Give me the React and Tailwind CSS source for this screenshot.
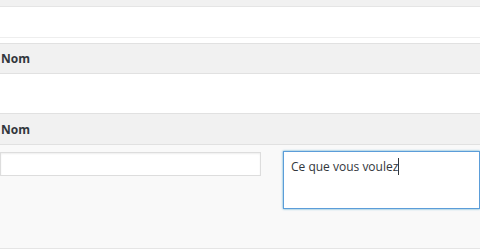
const App = () => {
  return (
    <div className="w-[480px] h-[250px] overflow-hidden bg-white text-[#23282d] font-['Open_Sans','Liberation_Sans',sans-serif]">
      {/* previous row */}
      <div className="h-[7px] bg-[#f1f1f1] border-b border-[#e5e5e5]" />
      <div className="h-[31px] bg-white border-b border-[#eeeeee]" />
      <div className="h-[5px]" />

      {/* first group */}
      <div className="h-[31px] bg-[#f1f1f1] border-y border-[#e1e1e1] flex items-center pl-[1px]">
        <span className="text-[12px] font-bold text-[#32373c]">Nom</span>
      </div>
      <div className="h-[39px] bg-white" />

      {/* second group */}
      <div className="h-[32px] bg-[#f1f1f1] border-y border-[#e1e1e1] flex items-center pl-[1px] pt-[2px]">
        <span className="text-[12px] font-bold text-[#32373c]">Nom</span>
      </div>
      <div className="h-[104px] bg-[#f9f9f9] border-b border-[#e5e5e5] flex items-start pt-[6px]">
        <div className="w-[261px] h-[24px] mt-[1px] bg-white border border-[#dddddd] shadow-[inset_0_1px_2px_rgba(0,0,0,0.07)]" />
        <div className="ml-[22px] flex-1 h-[58px] bg-white border border-[#5b9dd9] shadow-[0_0_2px_rgba(30,140,190,0.8)] px-[7px] pt-[1px]">
          <span className="text-[12px] text-[#32373c] border-r border-[#32373c] leading-[18px]">Ce que vous voulez</span>
        </div>
      </div>
    </div>
  );
};

export default App;
